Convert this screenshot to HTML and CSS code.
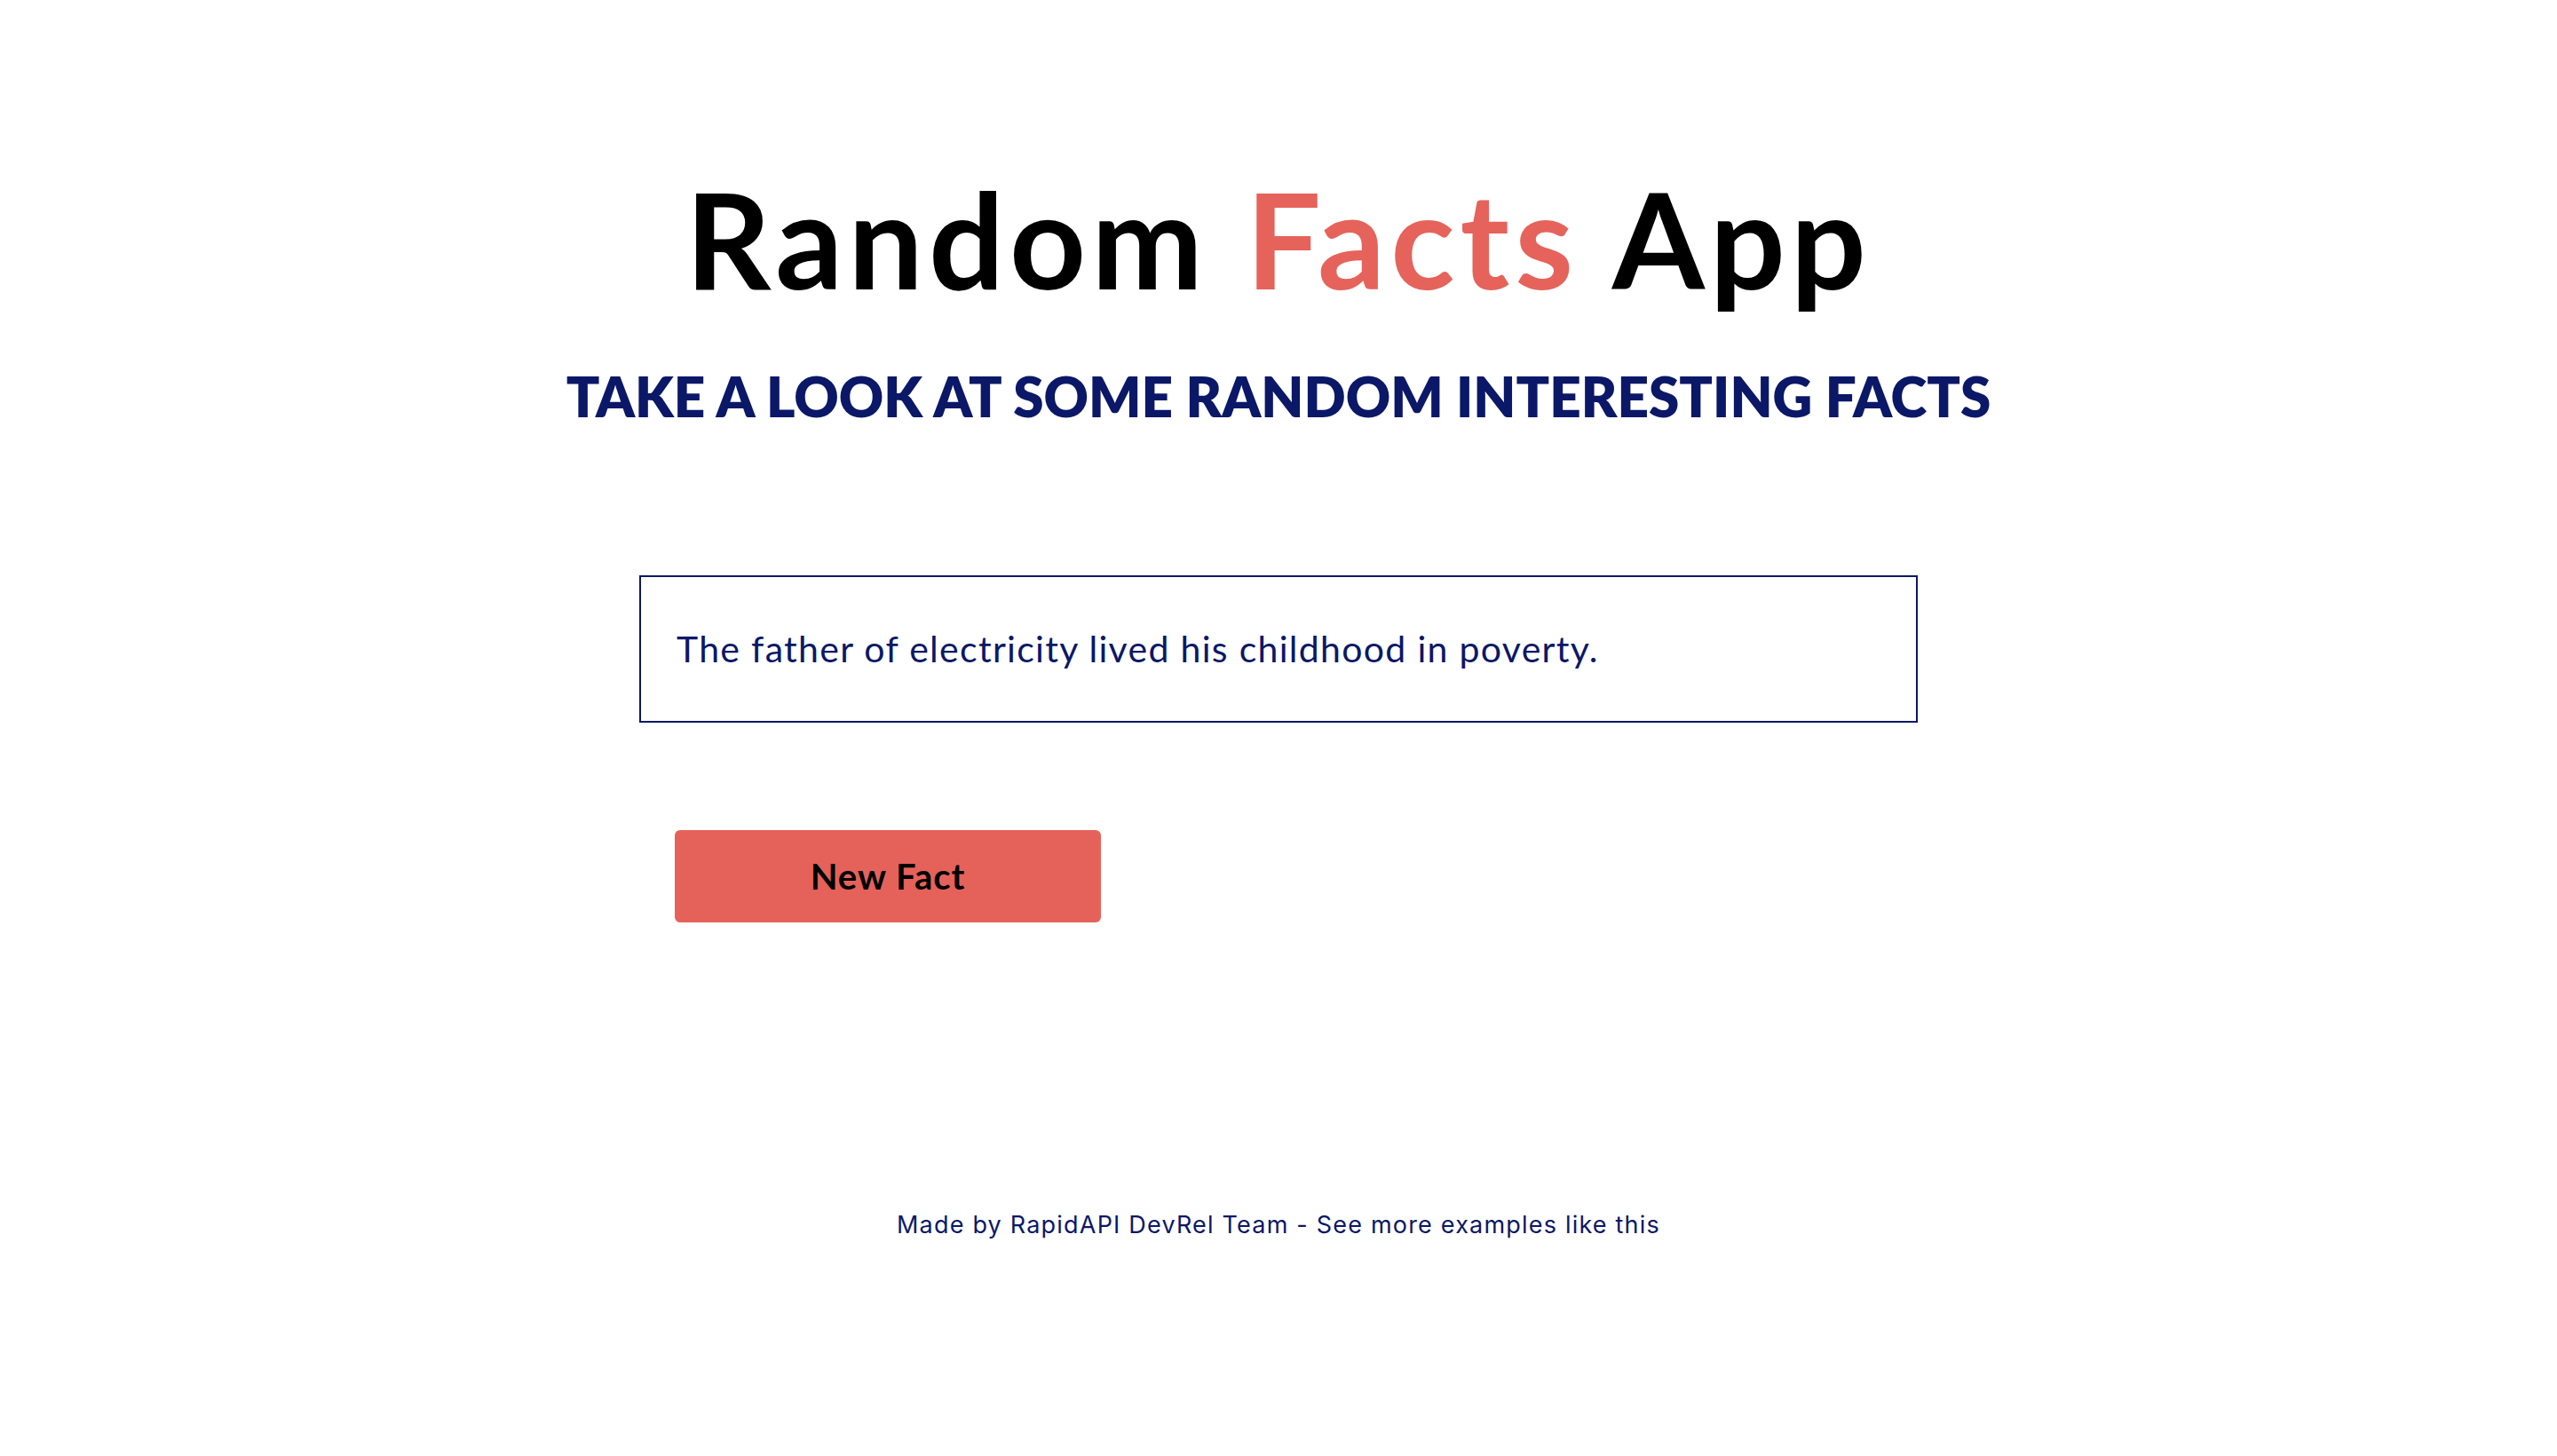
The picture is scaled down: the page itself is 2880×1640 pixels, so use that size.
FILE: index.html
```html
<!DOCTYPE html>
<html lang="en">
<head>
<meta charset="utf-8">
<title>Random Facts App</title>
<link rel="stylesheet" href="styles.css">
</head>
<body>
<main class="app">
  <header class="header">
    <h1 class="title">Random <span class="accent">Facts</span> App</h1>
    <h2 class="subtitle">Take a look at some random interesting facts</h2>
  </header>
  <section class="content">
    <div class="fact-box">
      <p class="fact">The father of electricity lived his childhood in poverty.</p>
    </div>
    <div class="actions">
      <button class="btn" type="button">New Fact</button>
    </div>
  </section>
  <footer class="footer">Made by RapidAPI DevRel Team - See more examples like this</footer>
</main>
</body>
</html>
```

FILE: styles.css
```css
html, body {
  margin: 0;
  padding: 0;
  background: #ffffff;
}

body {
  font-family: "Lato", "Open Sans", sans-serif;
}

.app {
  display: flex;
  flex-direction: column;
  align-items: center;
}

.header {
  display: flex;
  flex-direction: column;
  align-items: center;
  white-space: nowrap;
}

.title {
  margin: 178px 0 0;
  text-align: center;
  font-size: 150px;
  line-height: 180px;
  font-weight: 700;
  letter-spacing: 6px;
  color: #000000;
}

.accent {
  color: #e5635b;
}

.subtitle {
  margin: 51px 0 0;
  text-align: center;
  font-size: 62px;
  line-height: 74px;
  font-weight: 800;
  text-transform: uppercase;
  color: #0b1867;
}

.content {
  width: 1440px;
  display: flex;
  flex-direction: column;
}

.fact-box {
  margin-top: 165px;
  height: 166px;
  box-sizing: border-box;
  border: 2px solid #0b1867;
  padding: 0 40px;
  display: flex;
  align-items: center;
}

.fact {
  margin: 0;
  font-size: 41px;
  line-height: 48px;
  letter-spacing: 1.3px;
  color: #0b1867;
}

.actions {
  margin-top: 121px;
  padding-left: 40px;
}

.btn {
  width: 480px;
  height: 104px;
  border: none;
  border-radius: 6px;
  background: #e5625a;
  color: #000000;
  font-family: "Lato", "Open Sans", sans-serif;
  font-size: 40px;
  font-weight: 700;
  letter-spacing: 1px;
  cursor: pointer;
}

.footer {
  margin-top: 325px;
  text-align: center;
  font-family: "Inter", "Liberation Sans", sans-serif;
  font-size: 27px;
  line-height: 32px;
  letter-spacing: 1.2px;
  color: #0b1867;
}
```
